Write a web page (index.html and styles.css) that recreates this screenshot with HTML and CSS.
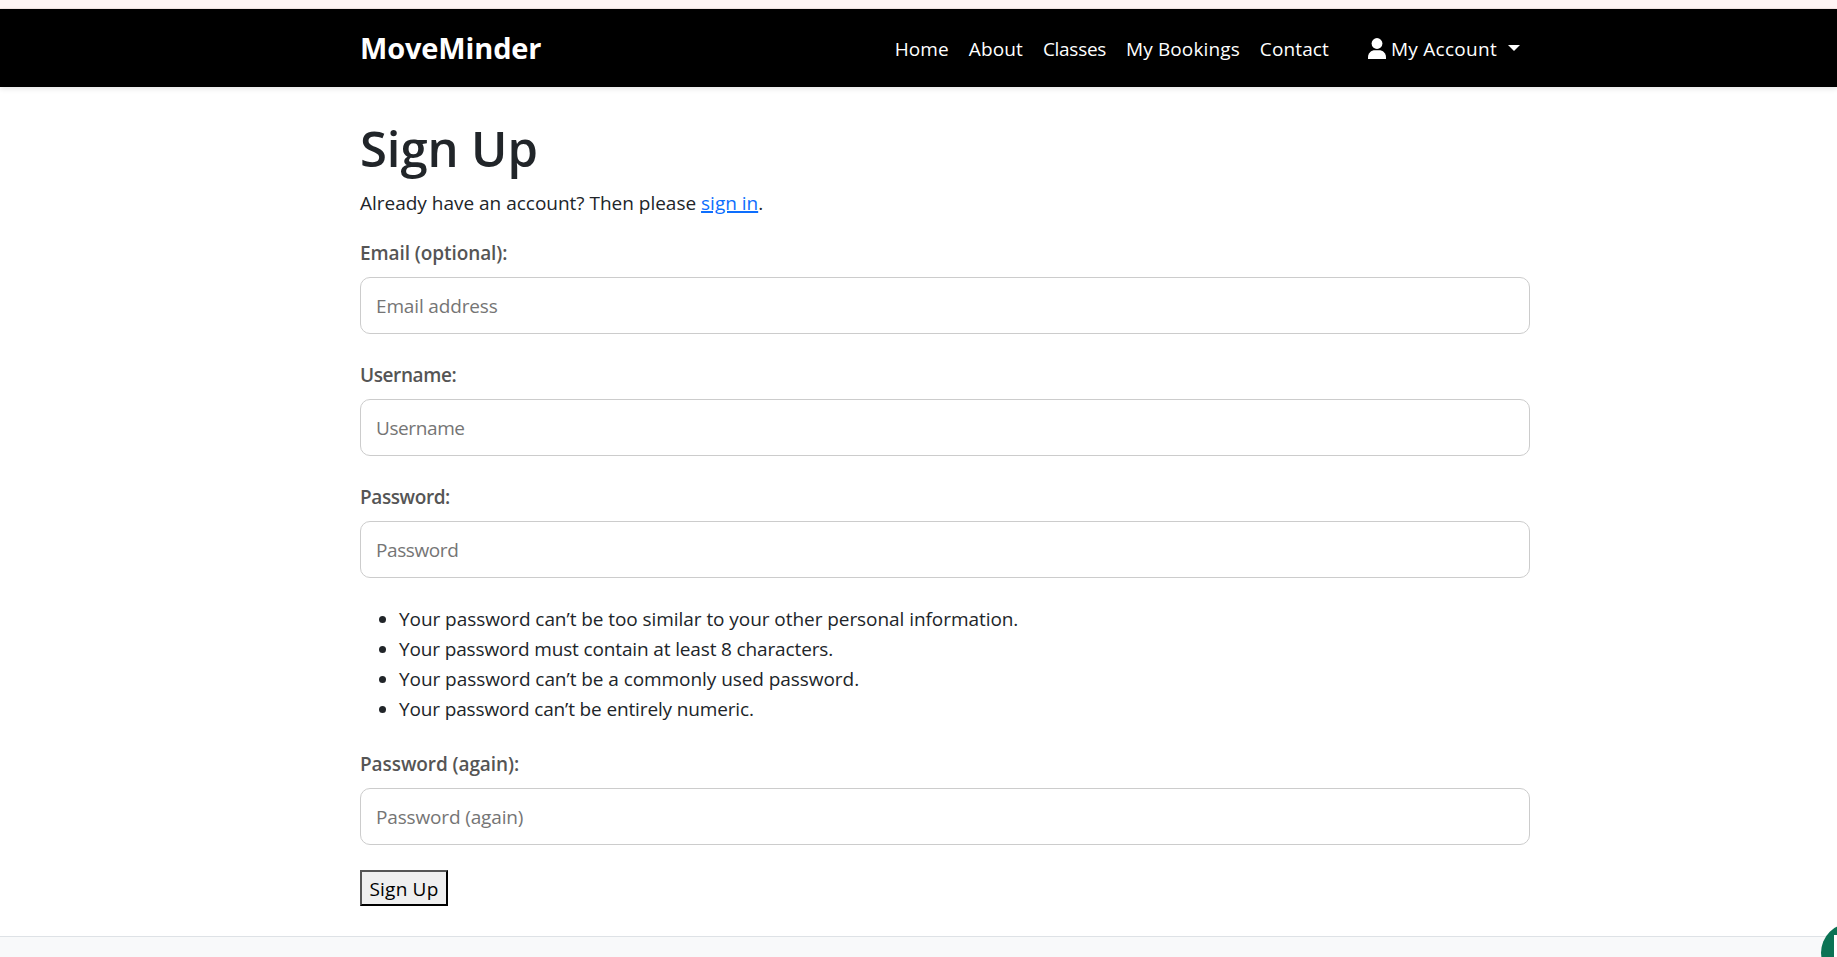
FILE: index.html
```
<!DOCTYPE html>
<html lang="en">
<head>
<meta charset="utf-8">
<title>MoveMinder - Sign Up</title>
<link rel="stylesheet" href="styles.css">
</head>
<body>
<div class="top-strip"></div>
<header class="navbar">
  <div class="container navbar-inner">
    <a class="brand">MoveMinder</a>
    <nav class="nav-links">
      <a class="nav-link">Home</a>
      <a class="nav-link">About</a>
      <a class="nav-link nav-link-tight">Classes</a>
      <a class="nav-link">My Bookings</a>
      <a class="nav-link">Contact</a>
      <a class="nav-link account">
        <svg class="user-icon" viewBox="0 0 18 21"><circle cx="9" cy="5.500" r="5.400"/><path d="M0 21v-1.500C0 15 3.200 12.300 7 12.300h4c3.800 0 7 2.700 7 7.200V21z"/></svg>
        <span>My Account</span>
        <span class="caret"></span>
      </a>
    </nav>
  </div>
</header>
<main class="container content">
  <h1 class="title">Sign Up</h1>
  <p class="lead">Already have an account? Then please <a class="link">sign in</a>.</p>
  <form>
    <label class="label" for="email">Email (optional):</label>
    <input class="field" id="email" type="email" placeholder="Email address">
    <label class="label label-tight" for="user">Username:</label>
    <input class="field field-tight" id="user" type="text" placeholder="Username">
    <label class="label label-tight" for="pw">Password:</label>
    <input class="field field-tight" id="pw" type="password" placeholder="Password">
    <ul class="hints">
      <li>Your password can’t be too similar to your other personal information.</li>
      <li class="hint-tight">Your password must contain at least 8 characters.</li>
      <li>Your password can’t be a commonly used password.</li>
      <li class="hint-tight">Your password can’t be entirely numeric.</li>
    </ul>
    <label class="label" for="pw2">Password (again):</label>
    <input class="field field-last" id="pw2" type="password" placeholder="Password (again)">
    <button class="submit" type="button">Sign Up</button>
  </form>
</main>
<footer class="footer"></footer>
<div class="chat"><div class="chat-mark"></div></div>
</body>
</html>
```
FILE: styles.css
```
* { box-sizing: border-box; }
html, body { height: 100%; }
body {
  margin: 0;
  display: flex;
  flex-direction: column;
  overflow: hidden;
  background: #fff;
  color: #212529;
  font: 19px/30px "Open Sans", "Noto Sans", sans-serif;
}
.container { width: 1170px; margin-left: 360px; }
.top-strip { flex: none; height: 9px; background: #fff5f4; border-bottom: 1px solid #f4e6e4; }
.navbar { flex: none; height: 78px; background: #000; box-shadow: 0 2px 5px rgba(0, 0, 0, .1); }
.navbar-inner { height: 78px; display: flex; align-items: center; justify-content: space-between; color: #fff; }
.brand { font-size: 29px; font-weight: 700; letter-spacing: -.15px; }
.nav-links { display: flex; gap: 20px; padding: 1px 10px 0 0; }
.nav-link { letter-spacing: .12px; }
.nav-link-tight { letter-spacing: -.3px; }
.account { display: flex; align-items: center; margin-left: 19px; letter-spacing: .28px; }
.user-icon { width: 18px; height: 21px; margin: -1px 5px 0 0; fill: #fff; }
.caret { margin: -2px 0 0 11px; border: 6px solid transparent; border-top-color: #fff; border-bottom: 0; }
.content { flex: none; height: 849px; padding-top: 31px; }
.title { margin: 0 0 10px; font-size: 49px; line-height: 60px; font-weight: 600; letter-spacing: -.1px; }
.lead { margin: 0 0 20px; letter-spacing: -.01px; }
.link { color: #0d6efd; text-decoration: underline; text-decoration-thickness: 2px; }
.label { display: block; margin-bottom: 9px; font-weight: 600; letter-spacing: -.08px; color: #555; }
.label-tight { letter-spacing: -.4px; }
.field {
  display: block;
  width: 100%;
  height: 57px;
  margin-bottom: 26px;
  padding: 0 15px;
  border: 1px solid #ccc;
  border-radius: 10px;
  background: #fff;
  font: inherit;
  letter-spacing: -.15px;
}
.field::placeholder { color: #757575; opacity: 1; }
.field-tight { letter-spacing: -.4px; }
.hints { margin: 0 0 25px; padding-left: 39px; letter-spacing: -.06px; }
.hint-tight { letter-spacing: -.14px; }
.field-last { margin-bottom: 25px; }
.submit {
  display: block;
  width: 88px;
  height: 36px;
  padding: 2px 0 0;
  border: 2px solid;
  border-color: #555 #000 #000 #555;
  background: #efefef;
  color: #000;
  font: inherit;
  letter-spacing: .2px;
}
.footer { flex: 1; border-top: 1px solid #dee2e6; background: #f8f9fa; }
.chat { position: fixed; left: 1821px; top: 923px; width: 60px; height: 60px; border-radius: 50%; background: #0b7354; }
.chat-mark { margin: 12px 0 0 13px; width: 34px; height: 32px; background: #fff; }
```
